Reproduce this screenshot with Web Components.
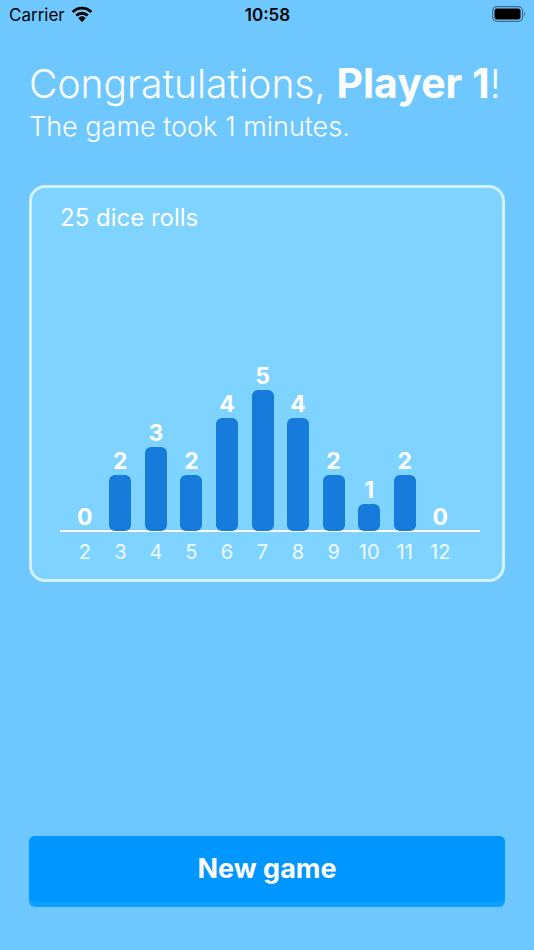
<!DOCTYPE html>
<html lang="en"><head><meta charset="utf-8"><title>Game over</title>
<style>html,body{margin:0;height:100%}body{background:#6ec8ff;font-family:Inter,"Liberation Sans",sans-serif}</style></head><body>
<game-summary></game-summary>
<script>
const define=(name,html)=>{const t=document.createElement('template');t.innerHTML=html;
customElements.define(name,class extends HTMLElement{constructor(){super();this.attachShadow({mode:'open'}).append(t.content.cloneNode(true))}})};
define('status-bar',`<style>
:host{display:grid;grid-template-columns:1fr auto 1fr;align-items:center;height:28px;padding:0 8px 0 9px;font-size:17px;line-height:20px;color:#000}
.left{display:flex;align-items:center;gap:6px}.time{font-weight:600}.left span,.time{padding-top:2px}.battery{justify-self:end}svg{display:block}</style>
<div class="left"><span>Carrier</span><svg width="22" height="16" viewBox="0 0 22 16"><path d="M11 16l3.2-3.2a1 1 0 0 0-.1-1.4 4.9 4.9 0 0 0-6.2 0 1 1 0 0 0-.1 1.4z"/><path d="M1.7 6a13.2 13.2 0 0 1 18.6 0M5.3 9.6a8.1 8.1 0 0 1 11.4 0" fill="none" stroke="#000" stroke-width="2.8"/></svg></div>
<span class="time">10:58</span>
<svg class="battery" width="34" height="16" viewBox="0 0 34 16"><rect x=".7" y=".7" width="29.8" height="14.6" rx="4" fill="none" stroke="#000" stroke-opacity=".45" stroke-width="1.2"/><rect x="2.5" y="2.5" width="26" height="11" rx="2.3"/><path d="M32 5.5q2 2.5 0 5z" opacity=".45"/></svg>`);
define('win-message',`<style>
:host{display:block;color:#fff}h1{margin:0;font-size:39px;line-height:50px;font-weight:300;white-space:nowrap}strong{font-size:41px;font-weight:700}p{margin:0;font-size:27px;line-height:36px;font-weight:300}</style>
<h1>Congratulations, <strong><slot name="player"></slot></strong>!</h1><p><slot></slot></p>`);
customElements.define('roll-bar',class extends HTMLElement{connectedCallback(){
const n=+this.getAttribute('count');this.attachShadow({mode:'open'}).innerHTML=`<style>
:host{display:flex;flex-direction:column;justify-content:flex-end;align-items:center;flex:1 1 0;min-width:0;color:#fff}
.count{font-size:23px;line-height:28px;font-weight:700}.bar{width:22px;border-radius:6px;background:#167bda;height:${n?Math.round(n*28.4)-1:0}px}
.label{font-size:20px;line-height:24px;font-weight:400;color:#f0faff;margin-top:9px;padding-bottom:1px}</style>
<span class="count">${n}</span><div class="bar"></div><span class="label">${this.getAttribute('value')}</span>`}});
customElements.define('roll-chart',class extends HTMLElement{connectedCallback(){
this.attachShadow({mode:'open'}).innerHTML=`<style>
:host{display:flex;flex-direction:column;border:3px solid #d4f1ff;border-radius:16px;background:#7fd3ff;padding:12px 22px 14px 28px;color:#fff}
h2{margin:0;font-size:24px;line-height:36px;font-weight:400}
.plot{display:flex;height:329px;padding:0 22px 0 7px;background:linear-gradient(#fff,#fff) 0 294px/100% 2px no-repeat}</style>
<h2><slot></slot></h2><div class="plot">${this.getAttribute('counts').split(',').map((n,i)=>`<roll-bar value="${i+2}" count="${n}"></roll-bar>`).join('')}</div>`}});
define('game-button',`<style>
:host{display:block}button{box-sizing:border-box;display:block;width:100%;height:71px;border:0;border-radius:6px;background:#0fa0ff;color:#fff;font:700 27px/66px Inter,"Liberation Sans",sans-serif;padding:0 0 5px}span{display:block;height:66px;border-radius:6px;background:#0096ff}</style><button type="button"><span><slot></slot></span></button>`);
define('game-summary',`<style>
:host{display:flex;flex-direction:column;min-height:100vh}main{flex:1;display:flex;flex-direction:column;padding:30px 29px 43px}
roll-chart{margin-top:40px}game-button{margin-top:auto}</style>
<status-bar></status-bar><main><win-message><span slot="player">Player 1</span>The game took 1 minutes.</win-message>
<roll-chart counts="0,2,3,2,4,5,4,2,1,2,0">25 dice rolls</roll-chart><game-button>New game</game-button></main>`);
</script></body></html>
